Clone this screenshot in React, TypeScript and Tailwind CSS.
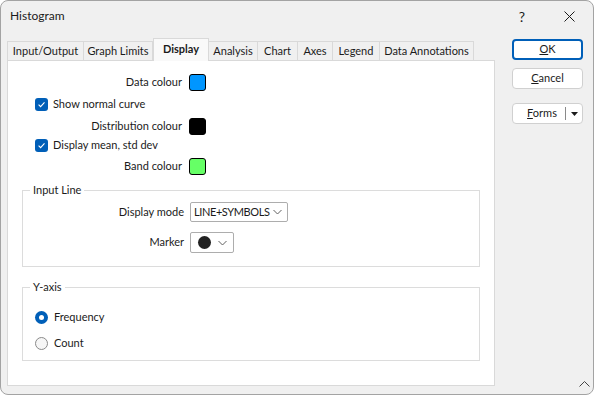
import React from "react";

const tabs = [
  { label: "Input/Output", w: "w-[77px]" },
  { label: "Graph Limits", w: "w-[69px]" },
  { label: "Display", w: "w-[56px]", active: true },
  { label: "Analysis", w: "w-[49px]" },
  { label: "Chart", w: "w-[40px]" },
  { label: "Axes", w: "w-[35px]" },
  { label: "Legend", w: "w-[47px]" },
  { label: "Data Annotations", w: "w-[94px]" },
];

function Check() {
  return (
    <span className="w-[13px] h-[13px] rounded-[3px] bg-[#005fb8] flex items-center justify-center shrink-0">
      <svg width="9" height="9" viewBox="0 0 9 9">
        <path d="M1.6 4.6 3.6 6.6 7.5 2.4" fill="none" stroke="white" strokeWidth="1.1" />
      </svg>
    </span>
  );
}

function Chevron() {
  return (
    <svg width="9" height="6" viewBox="0 0 9 6">
      <path d="M0.5 1 4.5 5 8.5 1" fill="none" stroke="#606060" strokeWidth="1" />
    </svg>
  );
}

function ColourRow({ label, colour, h }: { label: string; colour: string; h: string }) {
  return (
    <div className={`flex items-center ${h}`}>
      <div className="w-[174px] text-right">{label}</div>
      <div className={`ml-[7px] w-[17px] h-[17px] rounded-[3px] border border-black ${colour}`} />
    </div>
  );
}

function CheckRow({ label, h }: { label: string; h: string }) {
  return (
    <div className={`flex items-center pl-[27px] gap-[5px] ${h}`}>
      <Check />
      <span>{label}</span>
    </div>
  );
}

function Radio({ on, label, h }: { on?: boolean; label: string; h: string }) {
  return (
    <div className={`flex items-center pl-[12px] gap-[6px] ${h}`}>
      {on ? (
        <span className="w-[13px] h-[13px] rounded-full bg-[#005fb8] flex items-center justify-center">
          <span className="w-[5px] h-[5px] rounded-full bg-white" />
        </span>
      ) : (
        <span className="w-[13px] h-[13px] rounded-full border border-[#8a8a8a] bg-[#f6f6f6]" />
      )}
      <span>{label}</span>
    </div>
  );
}

export default function App() {
  return (
    <div className="w-[594px] h-[396px] bg-white text-[11px] text-[#1b1b1b] font-['Lato',sans-serif]">
      <div className="w-[594px] h-[395px] border border-[#a3a3a3] rounded-[8px] overflow-hidden bg-[#f0f0f0] flex flex-col">
        <div className="h-[30px] flex items-center pl-[9px] shrink-0 text-[12px]">
          <span>Histogram</span>
          <span className="ml-auto w-[16px] text-center text-[14px]">?</span>
          <span className="ml-[33px] mr-[18px] w-[12px] flex justify-center">
            <svg width="11" height="11" viewBox="0 0 11 11">
              <path d="M0.5 0.5 10.5 10.5M10.5 0.5 0.5 10.5" stroke="#1b1b1b" strokeWidth="1" />
            </svg>
          </span>
        </div>
        <div className="flex flex-1 pl-[6px] pt-[7px]">
          <div className="flex flex-col w-[488px]">
            <div className="flex items-end h-[22px] whitespace-nowrap">
              {tabs.map((t) =>
                t.active ? (
                  <div
                    key={t.label}
                    className={`${t.w} h-[23px] -mb-px z-10 bg-[#f9f9f9] border border-b-0 border-[#d9d9d9] flex items-center justify-center font-bold pb-[2px]`}
                  >
                    {t.label}
                  </div>
                ) : (
                  <div
                    key={t.label}
                    className={`${t.w} h-[19px] bg-[#f0f0f0] border border-b-0 border-l-0 first:border-l border-[#d9d9d9] flex items-center justify-center`}
                  >
                    {t.label}
                  </div>
                )
              )}
            </div>
            <div className="h-[326px] border border-[#d9d9d9] bg-white flex flex-col">
              <div className="mt-[10px]">
                <ColourRow label="Data colour" colour="bg-[#0096ff]" h="h-[22px]" />
                <CheckRow label="Show normal curve" h="h-[22px]" />
                <ColourRow label="Distribution colour" colour="bg-black" h="h-[22px]" />
                <CheckRow label="Display mean, std dev" h="h-[16px]" />
                <ColourRow label="Band colour" colour="bg-[#66ff66]" h="h-[26px]" />
              </div>
              <fieldset className="mx-[14px] mt-[3px] border border-[#dcdcdc] pb-[13px]">
                <legend className="ml-[7px] px-[3px] leading-[16px]">Input Line</legend>
                <div className="flex items-center mt-[4px] h-[20px]">
                  <div className="w-[161px] text-right">Display mode</div>
                  <div className="ml-[6px] w-[98px] h-[20px] border border-[#adadad] rounded-[2px] flex items-center pl-[3px] pr-[5px]">
                    <span className="tracking-[-0.4px]">LINE+SYMBOLS</span>
                    <span className="ml-auto flex">
                      <Chevron />
                    </span>
                  </div>
                </div>
                <div className="flex items-center mt-[10px] h-[21px]">
                  <div className="w-[161px] text-right">Marker</div>
                  <div className="ml-[6px] w-[44px] h-[21px] border border-[#adadad] rounded-[2px] flex items-center pl-[7px] pr-[6px]">
                    <span className="w-[13px] h-[13px] rounded-full bg-[#222]" />
                    <span className="ml-auto flex">
                      <Chevron />
                    </span>
                  </div>
                </div>
              </fieldset>
              <fieldset className="mx-[14px] mt-[12px] border border-[#dcdcdc] pb-[7px]">
                <legend className="ml-[7px] px-[3px] leading-[16px]">Y-axis</legend>
                <Radio on label="Frequency" h="h-[20px] mt-[12px]" />
                <Radio label="Count" h="h-[20px] mt-[6px]" />
              </fieldset>
            </div>
          </div>
          <div className="flex flex-col ml-[17px] w-[71px]">
            <div className="mt-[1px] h-[21px] rounded-[4px] border-2 border-[#005fb8] bg-white flex items-center justify-center">
              <span>
                <span className="underline">O</span>K
              </span>
            </div>
            <div className="mt-[8px] h-[21px] rounded-[4px] border border-[#d0d0d0] bg-white flex items-center justify-center">
              <span>
                <span className="underline">C</span>ancel
              </span>
            </div>
            <div className="mt-[14px] h-[21px] rounded-[4px] border border-[#d0d0d0] bg-white flex items-center">
              <div className="flex-1 text-center pl-[6px]">
                <span className="underline">F</span>orms
              </div>
              <div className="w-px h-[13px] bg-[#8a8a8a]" />
              <div className="w-[16px] flex justify-center">
                <svg width="7" height="4" viewBox="0 0 7 4">
                  <path d="M0 0h7L3.5 4z" fill="#1b1b1b" />
                </svg>
              </div>
            </div>
            <div className="mt-auto mb-[7px] self-end mr-[-7px] flex">
              <svg width="11" height="6" viewBox="0 0 11 6">
                <path d="M0.5 5.5 5.5 0.5 10.5 5.5" fill="none" stroke="#444" strokeWidth="1" />
              </svg>
            </div>
          </div>
        </div>
      </div>
    </div>
  );
}
